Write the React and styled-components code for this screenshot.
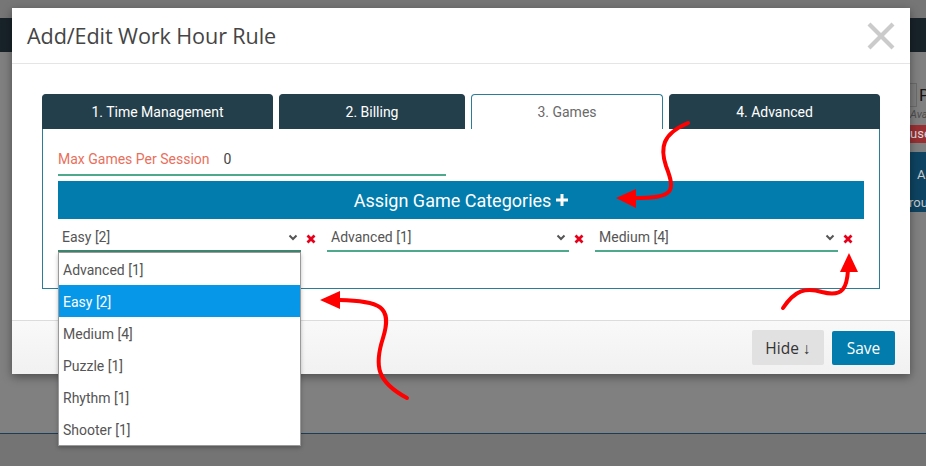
import React from "react";
import styled, { createGlobalStyle } from "styled-components";

const GlobalStyle = createGlobalStyle`
  html, body {
    margin: 0;
    padding: 0;
    background: #808080;
  }
  * {
    box-sizing: border-box;
  }
`;

// ---------- page behind the modal (already dimmed by the backdrop) ----------

const Page = styled.div`
  position: relative;
  width: 926px;
  height: 466px;
  overflow: hidden;
  background: #808080;
  font-family: Roboto, "Liberation Sans", sans-serif;
`;

const TopStrip = styled.div`
  height: 18px;
  background: #767676;
`;

const NavBar = styled.div`
  height: 34px;
  background: #182329;
`;

const Content = styled.div`
  display: flex;
  height: 381px;
`;

const MainArea = styled.div`
  width: 893px;
  flex: none;
`;

const SideBar = styled.div`
  flex: none;
  width: 33px;
  padding-top: 30px;
  display: flex;
  flex-direction: column;
  overflow: hidden;
`;

const SideRow = styled.div`
  display: flex;
  align-items: center;
  gap: 2px;
  height: 26px;
`;

const SideBox = styled.div`
  width: 24px;
  height: 24px;
  flex: none;
  border: 1px solid #6b6b6b;
  background: #7e7e7e;
`;

const SideLabel = styled.span`
  font-size: 17px;
  color: #151515;
`;

const SideHint = styled.div`
  font-size: 11px;
  font-style: italic;
  color: #4d4d4d;
  padding-left: 17px;
  height: 15px;
`;

const SideButton = styled.div`
  margin-top: 2px;
  height: 18px;
  background: #983033;
  color: #d8d8d8;
  font-size: 13px;
  padding-left: 17px;
  line-height: 18px;
`;

const SideCard = styled.div`
  margin-top: 9px;
  height: 60px;
  background: #0e4461;
  color: #c9c9c9;
  font-size: 13px;
  padding: 9px 0 0 24px;
  line-height: 28px;
`;

const PageFooter = styled.div`
  height: 33px;
  border-top: 1px solid #1d3c58;
  background: #747474;
`;

// ---------- modal ----------

const Modal = styled.div`
  position: absolute;
  left: 12px;
  top: 8px;
  width: 898px;
  height: 366px;
  background: #fff;
  box-shadow: 0 3px 9px rgba(0, 0, 0, 0.4);
  display: flex;
  flex-direction: column;
  z-index: 2;
`;

const Header = styled.div`
  height: 56px;
  flex: none;
  display: flex;
  align-items: center;
  justify-content: space-between;
  padding: 0 15px;
  border-bottom: 1px solid #e5e5e5;
`;

const Title = styled.h4`
  margin: 0;
  font-family: "Open Sans", "Noto Sans", sans-serif;
  font-weight: 400;
  font-size: 21.6px;
  color: #454545;
  letter-spacing: -0.1px;
`;

const CloseButton = styled.button`
  border: none;
  background: none;
  padding: 0;
  width: 28px;
  height: 28px;
  display: flex;
  cursor: pointer;
`;

const Body = styled.div`
  flex: 1;
  padding: 30px 30px 31px;
`;

const TabRow = styled.div`
  display: flex;
  gap: 6px;
  height: 35px;
`;

const Tab = styled.div`
  width: ${(p) => p.$w}px;
  flex: none;
  display: flex;
  align-items: center;
  justify-content: center;
  padding-bottom: 1px;
  border-radius: 4px 4px 0 0;
  font-size: 14px;
  font-weight: 400;
  background: ${(p) => (p.$active ? "#fff" : "#243f4c")};
  color: ${(p) => (p.$active ? "#6a6a6a" : "#fff")};
  border: 1px solid ${(p) => (p.$active ? "#2a7c97" : "#243f4c")};
  border-bottom: none;
`;

const Panel = styled.div`
  height: 160px;
  border: 1px solid #2a7c97;
  border-top: none;
  padding: 14px 15px 0;
`;

const MaxRow = styled.div`
  width: 388px;
  height: 33px;
  display: flex;
  align-items: center;
  gap: 14px;
  border-bottom: 2px solid #4ea88b;
  font-size: 14px;
`;

const MaxLabel = styled.span`
  color: #e96f5c;
`;

const MaxValue = styled.span`
  color: #444;
`;

const AssignBar = styled.div`
  margin-top: 5px;
  height: 38px;
  background: #017cad;
  color: #fff;
  font-size: 18px;
  font-weight: 400;
  display: flex;
  align-items: center;
  justify-content: center;
  gap: 5px;
`;

const SelectRow = styled.div`
  margin-top: 5px;
  display: grid;
  grid-template-columns: 269px 268px 269px;
`;

const SelectCell = styled.div`
  position: relative;
  display: flex;
  align-items: center;
`;

const SelectBox = styled.div`
  flex: 1;
  height: 28px;
  display: flex;
  align-items: center;
  justify-content: space-between;
  padding: 0 3px 0 4px;
  font-size: 14px;
  color: #555;
  border-bottom: 2px solid ${(p) => (p.$open ? "#3f8670" : "#4ea88b")};
`;

const RemoveIcon = styled.span`
  width: 26px;
  flex: none;
  display: flex;
  padding: 2px 0 0 5px;
`;

const DropList = styled.ul`
  position: absolute;
  top: 28px;
  left: 0;
  width: 243px;
  margin: 0;
  padding: 0;
  list-style: none;
  background: #fff;
  border: 1px solid #9a9a9a;
  box-shadow: 0 2px 4px rgba(0, 0, 0, 0.25);
  z-index: 3;
`;

const DropItem = styled.li`
  height: 32px;
  display: flex;
  align-items: center;
  padding: 1px 0 0 4px;
  font-size: 14px;
  color: ${(p) => (p.$selected ? "#fff" : "#555")};
  background: ${(p) => (p.$selected ? "#0797e8" : "#fff")};
`;

const Footer = styled.div`
  height: 54px;
  flex: none;
  border-top: 1px solid #dcdcdc;
  background: linear-gradient(#f9f9f9, #f1f1f1);
  display: flex;
  align-items: center;
  justify-content: flex-end;
  gap: 8px;
  padding: 0 15px;
  font-family: "Open Sans", "Noto Sans", sans-serif;
`;

const Button = styled.button`
  width: ${(p) => p.$w}px;
  height: ${(p) => (p.$primary ? 34 : 35)}px;
  padding: 0;
  border: none;
  border-radius: 2px;
  font-family: inherit;
  font-size: 15.5px;
  background: ${(p) => (p.$primary ? "#017cad" : "#e1e1e1")};
  color: ${(p) => (p.$primary ? "#fff" : "#333")};
  cursor: pointer;
`;

const Annotations = styled.svg`
  position: absolute;
  left: 0;
  top: 0;
  pointer-events: none;
  z-index: 5;
`;

const Chevron = () => (
  <svg width="10" height="7" viewBox="0 0 10 7">
    <path d="M1.5 1.5 L5 5 L8.5 1.5" fill="none" stroke="#555" strokeWidth="2" />
  </svg>
);

const RedCross = () => (
  <svg width="10" height="10" viewBox="0 0 10 10">
    <path d="M1.5 1.5 L8.5 8.5 M8.5 1.5 L1.5 8.5" stroke="#e5001b" strokeWidth="2.8" />
  </svg>
);

const tabs = [
  { label: "1. Time Management", w: 231 },
  { label: "2. Billing", w: 186 },
  { label: "3. Games", w: 192, active: true },
  { label: "4. Advanced", w: 211 },
];

const selects = ["Easy [2]", "Advanced [1]", "Medium [4]"];
const options = ["Advanced [1]", "Easy [2]", "Medium [4]", "Puzzle [1]", "Rhythm [1]", "Shooter [1]"];

export default function App() {
  return (
    <Page>
      <GlobalStyle />
      <TopStrip />
      <NavBar />
      <Content>
        <MainArea />
        <SideBar>
          <SideRow>
            <SideBox />
            <SideLabel>P</SideLabel>
          </SideRow>
          <SideHint>Ava</SideHint>
          <SideButton>use</SideButton>
          <SideCard>
            A<br />
            <span style={{ marginLeft: -8 }}>rou</span>
          </SideCard>
        </SideBar>
      </Content>
      <PageFooter />

      <Modal>
        <Header>
          <Title>Add/Edit Work Hour Rule</Title>
          <CloseButton>
            <svg width="28" height="28" viewBox="0 0 28 28">
              <path d="M2 2 L26 26 M26 2 L2 26" stroke="#cbcbcb" strokeWidth="4.2" />
            </svg>
          </CloseButton>
        </Header>

        <Body>
          <TabRow>
            {tabs.map((t) => (
              <Tab key={t.label} $w={t.w} $active={t.active}>
                {t.label}
              </Tab>
            ))}
          </TabRow>
          <Panel>
            <MaxRow>
              <MaxLabel>Max Games Per Session</MaxLabel>
              <MaxValue>0</MaxValue>
            </MaxRow>
            <AssignBar>
              Assign Game Categories
              <svg width="12" height="12" viewBox="0 0 12 12">
                <path d="M4.5 0 H7.5 V4.5 H12 V7.5 H7.5 V12 H4.5 V7.5 H0 V4.5 H4.5 Z" fill="#fff" />
              </svg>
            </AssignBar>
            <SelectRow>
              {selects.map((s, i) => (
                <SelectCell key={s}>
                  <SelectBox $open={i === 0}>
                    <span>{s}</span>
                    <Chevron />
                  </SelectBox>
                  <RemoveIcon>
                    <RedCross />
                  </RemoveIcon>
                  {i === 0 && (
                    <DropList>
                      {options.map((o) => (
                        <DropItem key={o} $selected={o === s}>
                          {o}
                        </DropItem>
                      ))}
                    </DropList>
                  )}
                </SelectCell>
              ))}
            </SelectRow>
          </Panel>
        </Body>

        <Footer>
          <Button $w={72}>Hide ↓</Button>
          <Button $w={63} $primary>
            Save
          </Button>
        </Footer>
      </Modal>

      {/* red hand-drawn arrows from the screenshot */}
      <Annotations width="926" height="466" viewBox="0 0 926 466">
        <g fill="none" stroke="#ff0000" strokeWidth="4" strokeLinecap="round">
          <path d="M688 123 C662 134 660 148 666 166 C676 192 674 198 634 198" />
          <path d="M407 398 C377 382 374 366 383 338 C393 306 380 301 339 300" />
          <path d="M783 308 C795 290 806 287 822 292 C844 298 847 286 848 270" />
        </g>
        <g fill="#ff0000">
          <path d="M616 198 L636 189 L636 208 Z" />
          <path d="M320 300 L340 291 L340 309 Z" />
          <path d="M849 253 L840 272 L858 272 Z" />
        </g>
      </Annotations>
    </Page>
  );
}
